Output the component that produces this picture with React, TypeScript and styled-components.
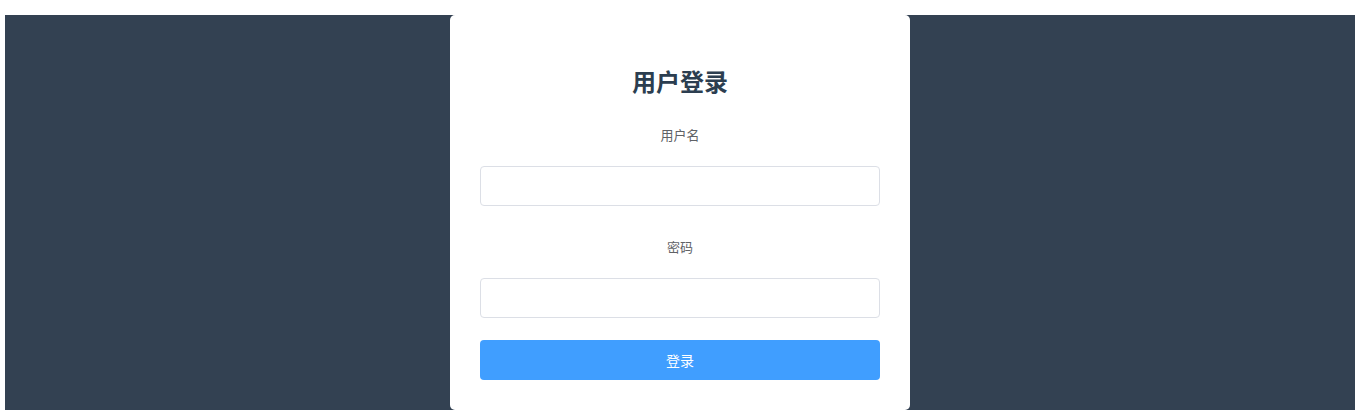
import React from "react";
import styled, { createGlobalStyle } from "styled-components";

const GlobalStyle = createGlobalStyle`
  html, body {
    margin: 0;
    padding: 0;
    background: #ffffff;
    overflow: hidden;
  }
  body {
    font-family: "Noto Sans CJK SC", "Noto Sans", "Liberation Sans", sans-serif;
  }
  * { box-sizing: border-box; }
`;

const Page = styled.div`
  padding: 15px 8px 0 5px;
`;

const Backdrop = styled.div`
  width: 1350px;
  height: 395px;
  background: #334152;
  display: flex;
  justify-content: center;
  align-items: flex-start;
`;

const Card = styled.form`
  width: 460px;
  height: 395px;
  background: #ffffff;
  border-radius: 5px;
  padding: 50px 30px 30px;
  display: flex;
  flex-direction: column;
`;

const Title = styled.h2`
  margin: 0 0 19px;
  font-size: 24px;
  line-height: 32px;
  font-weight: 700;
  color: #2c3e50;
  text-align: center;
`;

const Field = styled.div<{ $gapAfter: number }>`
  display: flex;
  flex-direction: column;
  margin-bottom: ${(p) => p.$gapAfter}px;
`;

const Label = styled.label`
  display: block;
  height: 40px;
  line-height: 38px;
  margin-bottom: 10px;
  font-size: 13px;
  color: #606266;
  text-align: center;
`;

const Input = styled.input`
  width: 400px;
  height: 40px;
  border: 1px solid #dcdfe6;
  border-radius: 4px;
  padding: 0 15px;
  font-size: 14px;
  color: #606266;
  outline: none;
  background: #ffffff;
`;

const Button = styled.button`
  width: 400px;
  height: 40px;
  border: none;
  border-radius: 4px;
  background: #409eff;
  color: #ffffff;
  font-family: inherit;
  font-size: 14px;
  line-height: 38px;
  cursor: pointer;
`;

export default function App() {
  return (
    <>
      <GlobalStyle />
      <Page>
        <Backdrop>
          <Card onSubmit={(e) => e.preventDefault()}>
            <Title>用户登录</Title>
            <Field $gapAfter={22}>
              <Label htmlFor="username">用户名</Label>
              <Input id="username" type="text" />
            </Field>
            <Field $gapAfter={22}>
              <Label htmlFor="password">密码</Label>
              <Input id="password" type="password" />
            </Field>
            <Button type="submit">登录</Button>
          </Card>
        </Backdrop>
      </Page>
    </>
  );
}
